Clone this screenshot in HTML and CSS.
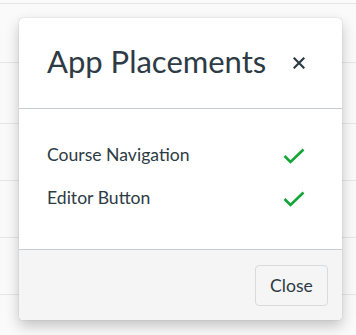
FILE: index.html
```html
<!DOCTYPE html>
<html lang="en">
<head>
    <meta charset="UTF-8">
    <meta name="viewport" content="width=device-width, initial-scale=1.0">
    <title>App Placements</title>
    <link rel="stylesheet" href="styles.css">
</head>
<body>
    <div class="page">
      <div class="row row-top"></div>
      <div class="row row-a"></div>
      <div class="row row-b"></div>
      <div class="row"></div>
      <div class="row"></div>
      <div class="row"></div>
    </div>

    <div class="dialog" role="dialog" aria-label="App Placements">
      <div class="dialog-header">
          <h2 class="dialog-title">App Placements</h2>
          <button class="dialog-x" aria-label="Close">
              <svg width="12" height="12" viewBox="0 0 12 12">
                  <path d="M1.5 1.5 L10.5 10.5 M10.5 1.5 L1.5 10.5" stroke="#2d3b45" stroke-width="2.2" stroke-linecap="square" fill="none"/>
              </svg>
          </button>
      </div>

      <div class="dialog-body">
          <div class="placement">
              <span>Course Navigation</span>
              <svg class="check" width="22" height="16" viewBox="0 0 22 16">
                  <path d="M1.5 8 L7.5 14 L20.5 1.5" stroke="#13a538" stroke-width="2.6" fill="none"/>
              </svg>
          </div>
          <div class="placement">
              <span>Editor Button</span>
              <svg class="check" width="22" height="16" viewBox="0 0 22 16">
                  <path d="M1.5 8 L7.5 14 L20.5 1.5" stroke="#13a538" stroke-width="2.6" fill="none"/>
              </svg>
          </div>
      </div>

      <div class="dialog-footer">
          <button class="btn">Close</button>
      </div>
    </div>
</body>
</html>
```

FILE: styles.css
```css
  body {
      font-family: Lato, "Liberation Sans", sans-serif;
      background-color: #fafafa;
      margin: 0;
      color: #2d3b45;
  }

  .page {
      display: flex;
      flex-direction: column;
  }

  .row {
      height: 56px;
      border-bottom: 1px solid #e6e6e6;
  }

  .row-top {
      height: 3px;
  }

  .row-a {
      height: 58px;
  }

  .row-b {
      height: 60px;
  }

  .dialog {
      position: absolute;
      left: 19px;
      top: 18px;
      width: 323px;
      height: 302px;
      display: flex;
      flex-direction: column;
      background-color: #fff;
      border-radius: 4px;
      box-shadow: 0 0 1px rgba(0, 0, 0, 0.35), 0 6px 14px rgba(0, 0, 0, 0.22);
      overflow: hidden;
  }

  .dialog-header {
      height: 90px;
      display: flex;
      align-items: center;
      justify-content: space-between;
      padding: 0 36px 0 28px;
      border-bottom: 1px solid #c7cdd1;
  }

  .dialog-title {
      margin: 0;
      font-size: 31px;
      font-weight: 400;
      padding-bottom: 4px;
  }

  .dialog-x {
      border: none;
      background: none;
      padding: 0;
      width: 14px;
      height: 14px;
      display: flex;
      align-items: center;
      justify-content: center;
  }

  .dialog-body {
      flex: 1;
      padding: 33px 37px 0 28px;
      display: flex;
      flex-direction: column;
      gap: 19px;
  }

  .placement {
      display: flex;
      justify-content: space-between;
      align-items: center;
      font-size: 17.6px;
      height: 24px;
  }

  .check {
      margin-top: 3px;
  }

  .dialog-footer {
      height: 70px;
      display: flex;
      align-items: center;
      justify-content: flex-end;
      padding: 0 14px;
      background-color: #f5f5f5;
      border-top: 1px solid #c7cdd1;
  }

  .btn {
      font-family: Lato, "Liberation Sans", sans-serif;
      font-size: 17.6px;
      color: #2d3b45;
      background-color: #f5f5f5;
      border: 1px solid #d7dbde;
      border-radius: 4px;
      height: 41px;
      width: 73px;
      padding: 0;
  }
```
